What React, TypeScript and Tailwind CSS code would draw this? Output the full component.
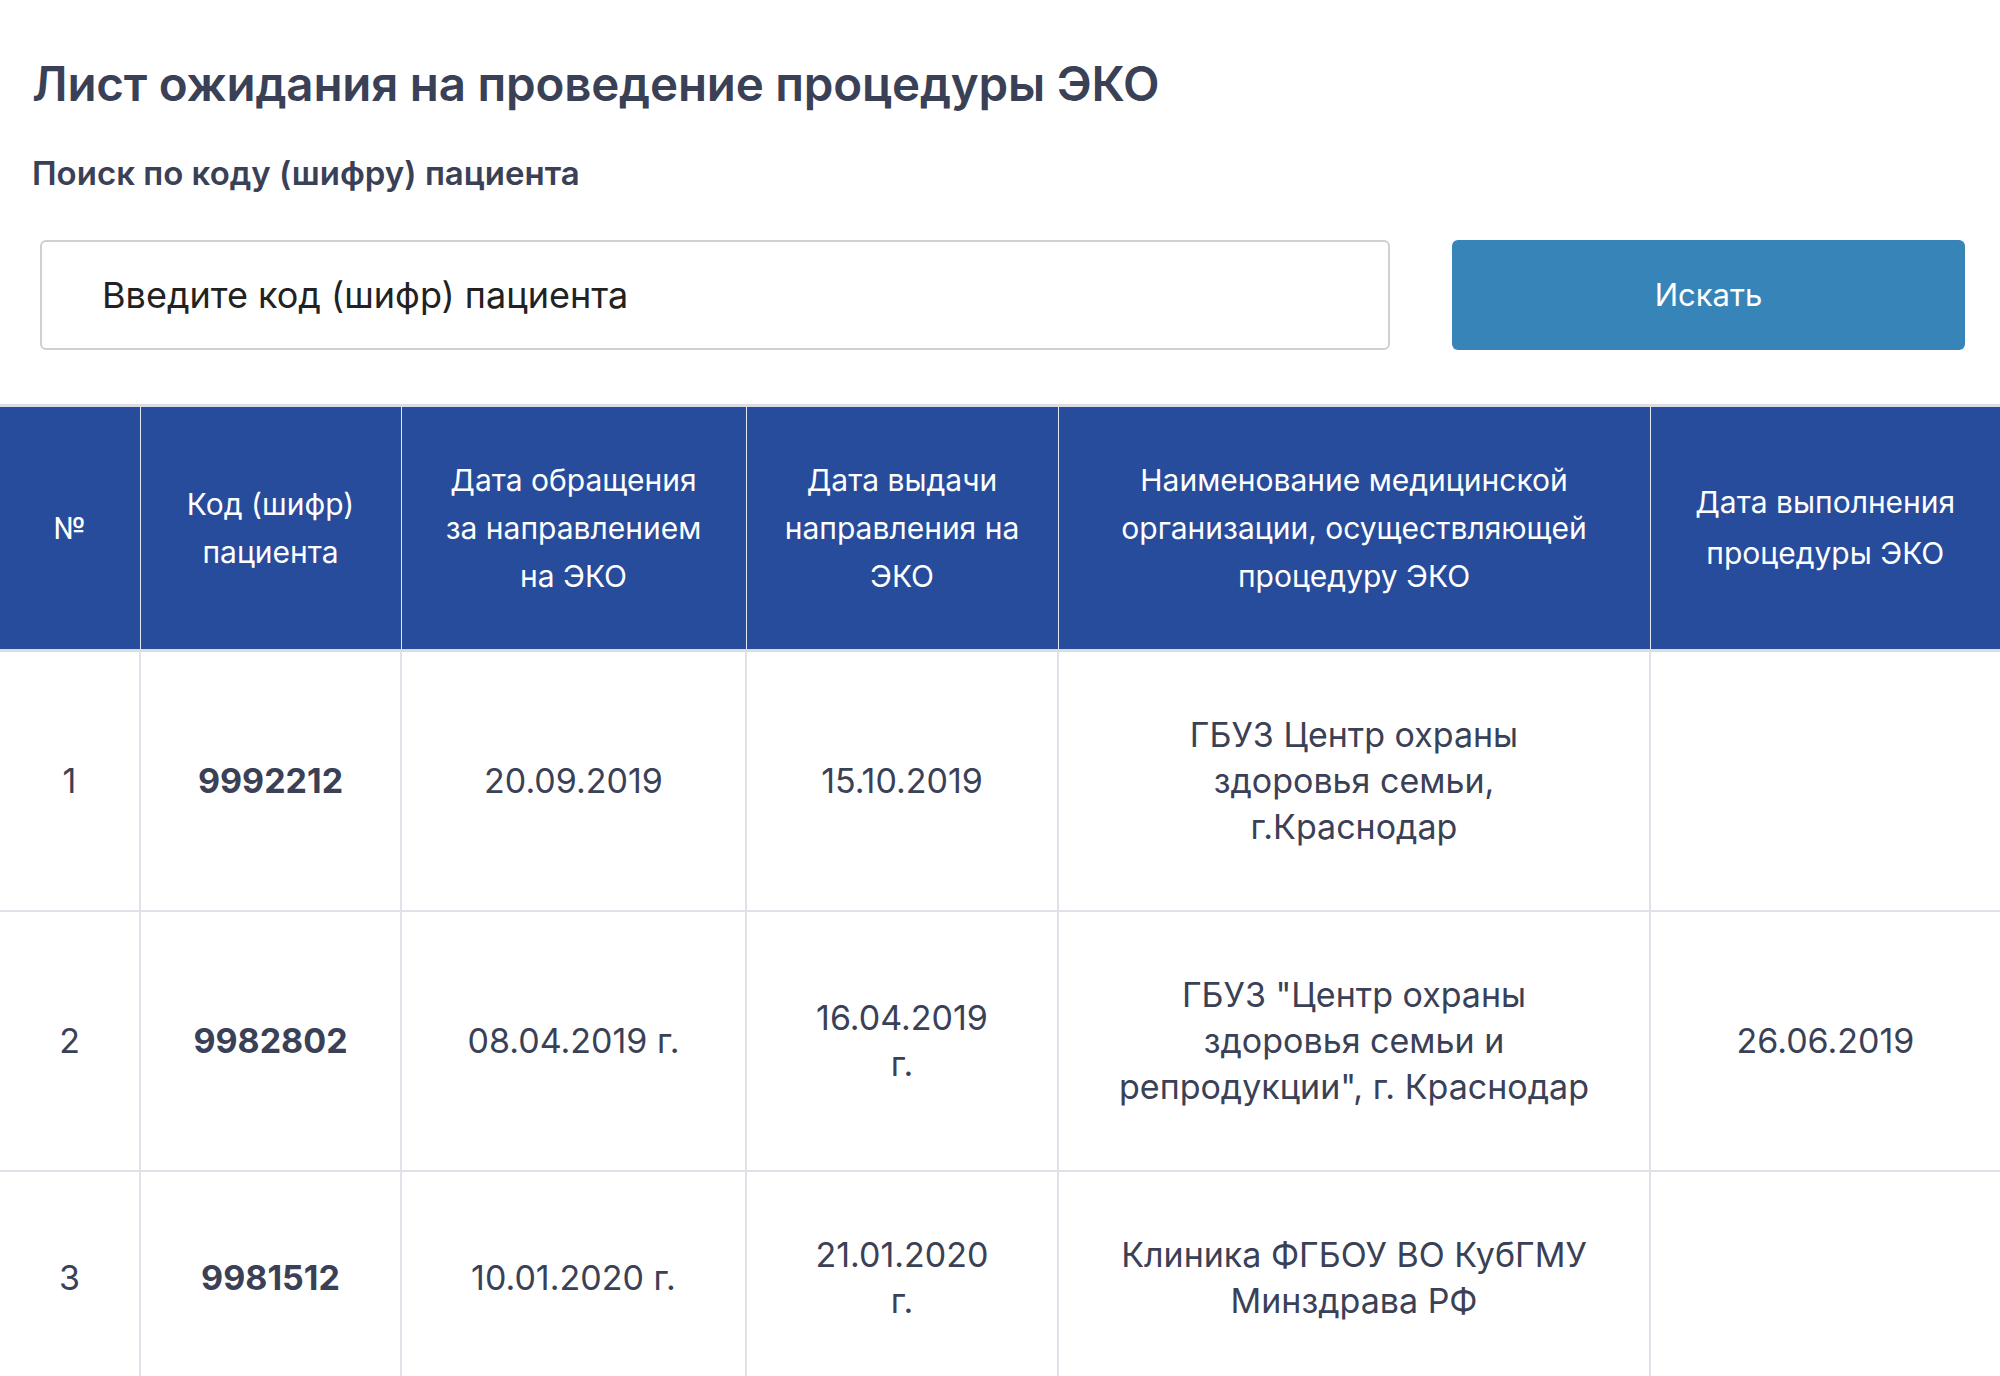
import React from 'react';

type Row = {
  n: string;
  code: string;
  applied: string[];
  issued: string[];
  org: string[];
  done: string[];
};

const rows: Row[] = [
  {
    n: '1',
    code: '9992212',
    applied: ['20.09.2019'],
    issued: ['15.10.2019'],
    org: ['ГБУЗ Центр охраны', 'здоровья семьи,', 'г.Краснодар'],
    done: [],
  },
  {
    n: '2',
    code: '9982802',
    applied: ['08.04.2019 г.'],
    issued: ['16.04.2019', 'г.'],
    org: ['ГБУЗ "Центр охраны', 'здоровья семьи и', 'репродукции", г. Краснодар'],
    done: ['26.06.2019'],
  },
  {
    n: '3',
    code: '9981512',
    applied: ['10.01.2020 г.'],
    issued: ['21.01.2020', 'г.'],
    org: ['Клиника ФГБОУ ВО КубГМУ', 'Минздрава РФ'],
    done: [],
  },
];

function Lines({ items }: { items: string[] }) {
  return (
    <>
      {items.map((t, i) => (
        <React.Fragment key={i}>
          {i > 0 && <br />}
          {t}
        </React.Fragment>
      ))}
    </>
  );
}

export default function App() {
  return (
    <div className="min-h-screen bg-white font-['Inter','Noto_Sans',sans-serif] text-[#3a4156]">
      {/* Heading + search */}
      <div className="px-8 pt-[52px]">
        <h1 className="text-[47.5px] font-semibold leading-[64px] tracking-[-0.2px]">
          Лист ожидания на проведение процедуры ЭКО
        </h1>
        <p className="mt-[37px] text-[33px] font-semibold leading-[40px]">Поиск по коду (шифру) пациента</p>
        <div className="mt-[47px] flex items-stretch gap-[62px] pl-2 pr-[3px]">
          <input
            type="text"
            placeholder="Введите код (шифр) пациента"
            className="h-[110px] w-[1350px] rounded-md border-2 border-[#d0d0d0] px-[60px] text-[36px] text-[#222] placeholder:text-[#222] outline-none"
          />
          <button className="h-[110px] flex-1 rounded-md bg-[#3784b8] text-[31px] text-white">Искать</button>
        </div>
      </div>

      {/* Table */}
      <table className="mt-[54px] w-full table-fixed border-collapse">
        <colgroup>
          <col className="w-[140px]" />
          <col className="w-[261px]" />
          <col className="w-[345px]" />
          <col className="w-[312px]" />
          <col className="w-[592px]" />
          <col />
        </colgroup>
        <thead>
          <tr className="h-[245px] border-y-[3px] border-[#dadde5] bg-[#274c9c] text-[30px] font-normal leading-[48px] text-white">
            <th className="border-r border-[#e3e7f0] px-4 font-normal">№</th>
            <th className="border-r border-[#e3e7f0] px-6 font-normal">
              <Lines items={['Код (шифр)', 'пациента']} />
            </th>
            <th className="border-r border-[#e3e7f0] px-4 font-normal">
              <Lines items={['Дата обращения', 'за направлением', 'на ЭКО']} />
            </th>
            <th className="border-r border-[#e3e7f0] px-4 font-normal">
              <Lines items={['Дата выдачи', 'направления на', 'ЭКО']} />
            </th>
            <th className="border-r border-[#e3e7f0] px-6 font-normal">
              <Lines items={['Наименование медицинской', 'организации, осуществляющей', 'процедуру ЭКО']} />
            </th>
            <th className="px-6 font-normal leading-[51px]">
              <Lines items={['Дата выполнения', 'процедуры ЭКО']} />
            </th>
          </tr>
        </thead>
        <tbody className="text-[34px] leading-[46px]">
          {rows.map((r) => (
            <tr key={r.n} className="border-b-2 border-[#dfe2e8]">
              <td className="border-r-2 border-[#dfe2e8] px-4 py-[60px] text-center">{r.n}</td>
              <td className="border-r-2 border-[#dfe2e8] px-4 py-[60px] text-center font-bold">{r.code}</td>
              <td className="border-r-2 border-[#dfe2e8] px-4 py-[60px] text-center">
                <Lines items={r.applied} />
              </td>
              <td className="border-r-2 border-[#dfe2e8] px-4 py-[60px] text-center">
                <Lines items={r.issued} />
              </td>
              <td className="border-r-2 border-[#dfe2e8] px-4 py-[60px] text-center">
                <Lines items={r.org} />
              </td>
              <td className="px-4 py-[60px] text-center">
                <Lines items={r.done} />
              </td>
            </tr>
          ))}
        </tbody>
      </table>
    </div>
  );
}
